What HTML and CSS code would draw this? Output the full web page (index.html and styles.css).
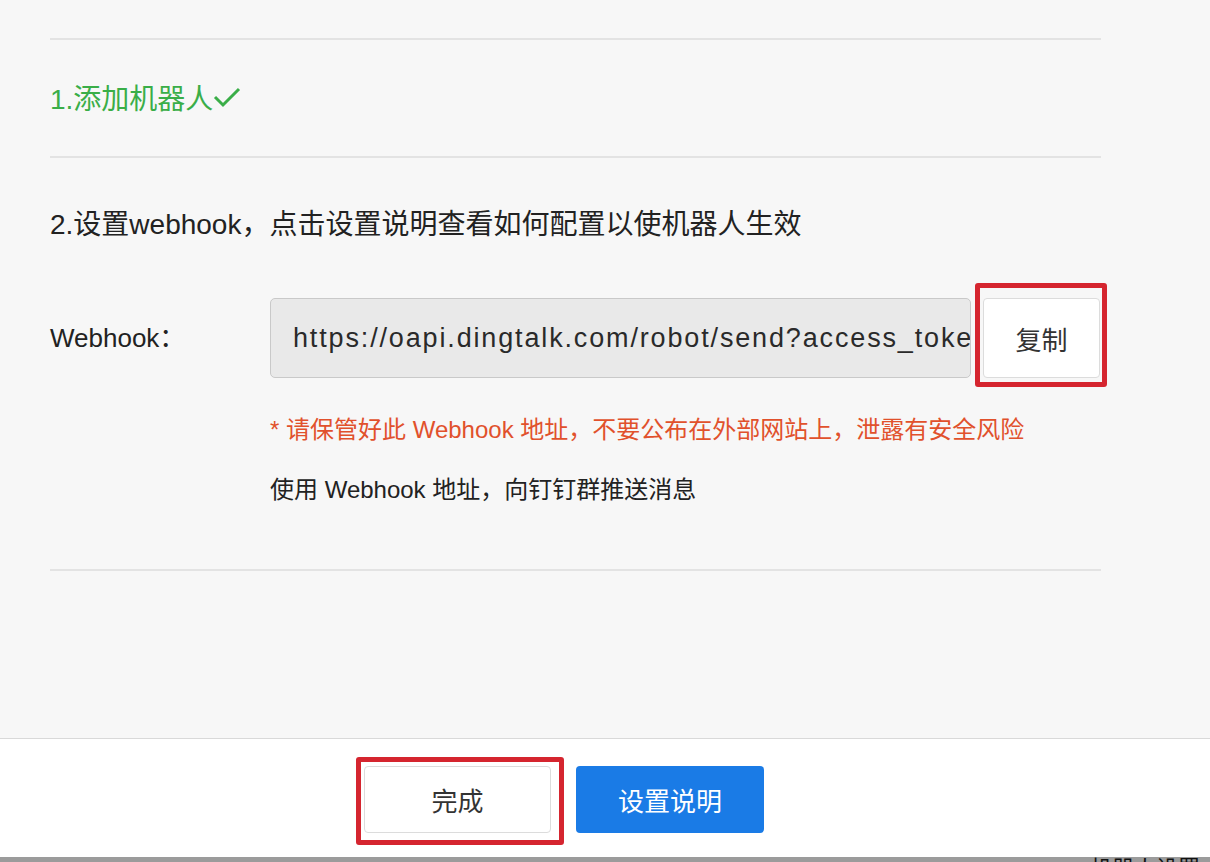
FILE: index.html
```html
<!DOCTYPE html>
<html lang="zh-CN">
  <head>
    <meta charset="UTF-8">
    <title>添加机器人</title>
    <link rel="stylesheet" href="styles.css">
  </head>
  <body>
    <div class="panel">
      <div class="steps">
        <div class="step step-done">
          <span>1.添加机器人</span>
          <svg class="check" width="28" height="22" viewBox="0 0 28 22">
            <polyline points="2,11 10,19 26,3" fill="none" stroke="#3aae48" stroke-width="3"/>
          </svg>
        </div>

        <div class="step step-active">
          <p class="step-title">2.设置webhook，点击设置说明查看如何配置以使机器人生效</p>
          <div class="field">
            <label class="field-label">Webhook：</label>
            <div class="field-body">
              <div class="url-row">
                <input class="url-input" type="text" readonly value="https://oapi.dingtalk.com/robot/send?access_token=3b9c8e2f71a04d6b">
                <span class="mark mark-copy">
                  <button class="btn btn-plain btn-copy">复制</button>
                </span>
              </div>
              <p class="warn">* 请保管好此 Webhook 地址，不要公布在外部网站上，泄露有安全风险</p>
              <p class="hint">使用 Webhook 地址，向钉钉群推送消息</p>
            </div>
          </div>
        </div>
      </div>
    </div>

    <div class="footer">
      <span class="mark mark-done">
        <button class="btn btn-plain btn-done">完成</button>
      </span>
      <button class="btn btn-primary">设置说明</button>
    </div>

    <div class="strip">
      <span class="strip-text">机器人设置</span>
    </div>
  </body>
</html>
```

FILE: styles.css
```css
*{
  box-sizing: border-box;
}

html, body{
  height: 100%;
}

body{
  margin: 0;
  padding: 0;
  display: flex;
  flex-direction: column;
  overflow: hidden;
  font-family: "Liberation Sans", "Noto Sans CJK SC", sans-serif;
  color: #222;
  background: #f7f7f7;
}

p{
  margin: 0;
}

.panel{
  flex: 1;
  background: #f7f7f7;
}

.steps{
  width: 1051px;
  margin-left: 50px;
  padding-top: 38px;
}

.step{
  border-top: 2px solid #e3e3e3;
}

.step-done{
  height: 118px;
  display: flex;
  align-items: center;
  padding-bottom: 2px;
  font-size: 28px;
  color: #3aae48;
}

.step-done .check{
  margin-left: 0;
  margin-top: -1px;
}

.step-active{
  padding-top: 47px;
  padding-bottom: 63px;
  border-bottom: 2px solid #e3e3e3;
}

.step-title{
  font-size: 28px;
  line-height: 40px;
  color: #222;
}

.field{
  display: flex;
  margin-top: 53px;
}

.field-label{
  flex-shrink: 0;
  width: 220px;
  height: 80px;
  line-height: 80px;
  font-size: 26px;
  color: #222;
}

.field-body{
  flex: 1;
  min-width: 0;
}

.url-row{
  display: flex;
  gap: 12px;
}

.url-input{
  flex-shrink: 0;
  width: 701px;
  height: 80px;
  padding: 0 0 0 22px;
  border: 1px solid #c9c9c9;
  border-radius: 5px;
  background: #e9e9e9;
  font-family: "Liberation Sans", "Noto Sans CJK SC", sans-serif;
  font-size: 27px;
  letter-spacing: 1.85px;
  color: #2a2a2a;
  outline: none;
}

/* red highlight boxes */
.mark{
  flex-shrink: 0;
  display: inline-flex;
  border: 5px solid #d5252f;
  border-radius: 3px;
}

.mark-copy{
  padding: 10px 2px 4px 3px;
  margin: -15px 0 -9px -8px;
}

.mark-done{
  padding: 4px 8px 7px 3px;
}

.btn{
  font-family: "Liberation Sans", "Noto Sans CJK SC", sans-serif;
  font-size: 26px;
  border-radius: 4px;
  cursor: pointer;
}

.btn-plain{
  background: #fff;
  border: 1px solid #dcdcdc;
  color: #333;
}

.btn-copy{
  width: 117px;
  height: 80px;
}

.btn-done{
  width: 187px;
  height: 67px;
}

.btn-primary{
  width: 188px;
  height: 67px;
  margin-top: 9px;
  margin-left: 12px;
  background: #1a7be6;
  border: none;
  color: #fff;
}

.warn{
  margin-top: 34px;
  font-size: 24px;
  line-height: 36px;
  color: #e1512c;
}

.hint{
  margin-top: 26px;
  font-size: 24px;
  line-height: 32px;
  color: #222;
}

.footer{
  height: 119px;
  display: flex;
  align-items: flex-start;
  padding-top: 18px;
  padding-left: 356px;
  background: #fff;
  border-top: 1px solid #d9d9d9;
}

.strip{
  height: 5px;
  overflow: hidden;
  background: #9b9b9b;
  display: flex;
  justify-content: flex-end;
  padding-right: 10px;
}

.strip-text{
  font-size: 22px;
  line-height: 1;
  margin-top: 1px;
  color: #111;
}
```
